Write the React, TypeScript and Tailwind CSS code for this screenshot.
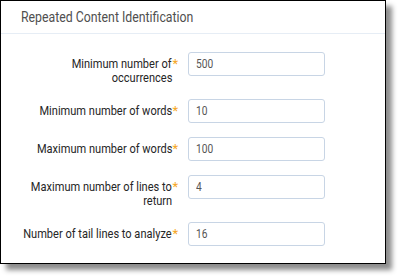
import React from "react";

const rows: { lines: string[]; value: string }[] = [
  { lines: ["Minimum number of", "occurrences"], value: "500" },
  { lines: ["Minimum number of words"], value: "10" },
  { lines: ["Maximum number of words"], value: "100" },
  { lines: ["Maximum number of lines to", "return"], value: "4" },
  { lines: ["Number of tail lines to analyze"], value: "16" },
];

export default function App() {
  return (
    <div className="w-[400px] h-[279px] bg-white" style={{ fontFamily: "Roboto, 'Liberation Sans', sans-serif" }}>
      <div className="w-[386px] h-[264px] border border-black bg-white shadow-[6px_6px_5px_rgba(0,0,0,0.45)] flex flex-col">
        <div className="h-[33px] border-b border-[#e6edf5] pl-[20px] pt-[6px] text-[15px] leading-[20px] text-[#505050] whitespace-nowrap">
          <span className="inline-block origin-left scale-x-[0.82]">Repeated Content Identification</span>
        </div>
        <div className="flex flex-col gap-[14px] pt-[18px]">
          {rows.map((r, i) => (
            <div key={i} className="flex items-start">
              <div className="relative w-[178px] pr-[7px] pt-[5px] flex flex-col items-end text-[13px] leading-[14px] text-[#262626] whitespace-nowrap">
                {r.lines.map((l, j) => (
                  <span key={j} className="inline-block origin-right scale-x-[0.85]">{l}</span>
                ))}
                <span className="absolute right-[1px] top-[5px] text-[#f5a623]">*</span>
              </div>
              <div className="ml-[9px] w-[137px] h-[24px] border border-[#c8d5e5] rounded-[3px] pl-[7px] text-[12px] leading-[22px] text-[#555] whitespace-nowrap">
                <span className="inline-block origin-left scale-x-[0.85]">{r.value}</span>
              </div>
            </div>
          ))}
        </div>
      </div>
    </div>
  );
}
